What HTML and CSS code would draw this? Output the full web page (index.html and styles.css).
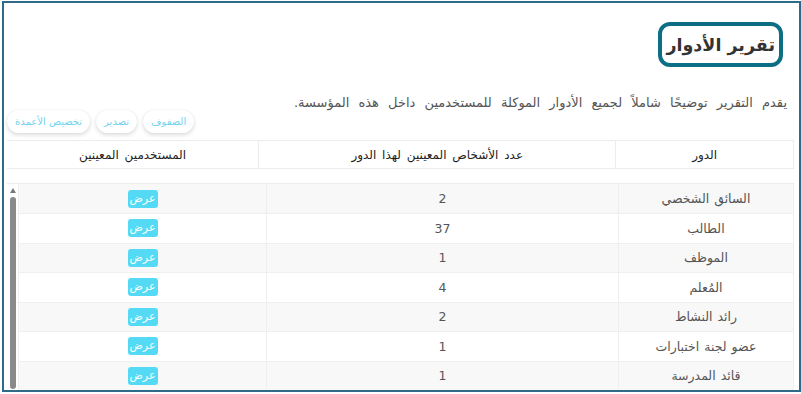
FILE: index.html
```html
<!DOCTYPE html>
<html lang="ar" dir="rtl">
<head>
<meta charset="utf-8">
<link rel="stylesheet" href="styles.css">
</head>
<body>
<div class="frame">
  <div class="title-row">
    <h1 class="title">تقرير الأدوار</h1>
  </div>
  <p class="desc">يقدم التقرير توضيحًا شاملاً لجميع الأدوار الموكلة للمستخدمين داخل هذه المؤسسة.</p>
  <div class="toolbar">
    <button class="tbtn">الصفوف</button>
    <button class="tbtn">تصدير</button>
    <button class="tbtn">تخصيص الأعمدة</button>
  </div>
  <table class="head">
    <colgroup><col class="c1"><col class="c2"><col class="c3"></colgroup>
    <tr class="hrow">
      <th>الدور</th>
      <th>عدد الأشخاص المعينين لهذا الدور</th>
      <th>المستخدمين المعينين</th>
    </tr>
    <tr class="gap"><td colspan="3"></td></tr>
  </table>
  <div class="body-wrap">
    <table class="rows">
      <colgroup><col class="c1"><col class="c2"><col class="c3"></colgroup>
      <tr><td>السائق الشخصي</td><td>2</td><td><span class="view">عرض</span></td></tr>
      <tr><td>الطالب</td><td>37</td><td><span class="view">عرض</span></td></tr>
      <tr><td>الموظف</td><td>1</td><td><span class="view">عرض</span></td></tr>
      <tr><td>المُعلم</td><td>4</td><td><span class="view">عرض</span></td></tr>
      <tr><td>رائد النشاط</td><td>2</td><td><span class="view">عرض</span></td></tr>
      <tr><td>عضو لجنة اختبارات</td><td>1</td><td><span class="view">عرض</span></td></tr>
      <tr><td>قائد المدرسة</td><td>1</td><td><span class="view">عرض</span></td></tr>
    </table>
    <div class="scrollbar">
      <span class="arrow"></span>
      <span class="thumb"></span>
    </div>
  </div>
</div>
</body>
</html>
```

FILE: styles.css
```css
* { box-sizing: border-box; }
html, body { margin: 0; padding: 0; background: #fff; }
body {
  font-family: "DejaVu Sans", "Noto Sans", sans-serif;
  color: #555;
}
.frame {
  margin: 1px 0 0 1px;
  width: 799px;
  height: 391px;
  border: 2px solid #2f6b88;
  overflow: hidden;
  direction: rtl;
  padding: 0 5px 0 3px;
  display: flex;
  flex-direction: column;
}
.title-row {
  display: flex;
  justify-content: flex-start;
  padding-right: 11px;
  margin-top: 19px;
}
.title {
  margin: 0;
  height: 45px;
  padding: 0 4px;
  border: 4px solid #0d6f84;
  border-radius: 12px;
  font-size: 17.5px;
  font-weight: bold;
  color: #333;
  line-height: 36px;
  display: flex;
  align-items: center;
}
.desc {
  margin: 28px 7px 0 0;
  font-size: 13px;
  line-height: 15px;
  word-spacing: 5px;
  color: #555;
}
.toolbar {
  display: flex;
  justify-content: flex-end;
  gap: 6px;
  height: 23px;
}
.tbtn {
  font-family: inherit;
  font-size: 10px;
  color: #74d4ef;
  background: #fff;
  border: none;
  border-radius: 12px;
  height: 23px;
  padding: 0 8px;
  box-shadow: 0 2px 4px rgba(0,0,0,0.14), 0 0 1px rgba(0,0,0,0.1);
}
table {
  border-collapse: collapse;
  table-layout: fixed;
  width: 100%;
}
.c1 { width: 22.6%; }
.c2 { width: 45.4%; }
.c3 { width: 32%; }
.head { margin-top: 7px; }
.hrow th {
  height: 28px;
  border-top: 1px solid #ececec;
  border-bottom: 1px solid #ececec;
  border-left: 1px solid #ececec;
  font-size: 12px;
  font-weight: normal;
  word-spacing: 2px;
  color: #222;
  padding: 0;
}
.hrow th:first-child { border-right: 1px solid #ececec; }
.hrow th:last-child { border-left: none; }
.gap td {
  height: 15px;
  border-bottom: 1px solid #ececec;
  padding: 0;
}
.body-wrap {
  display: flex;
  flex: 1;
  min-height: 0;
}
.rows { flex: 1; }
.rows tr { height: 29.5px; }
.rows tr:nth-child(odd) { background: #f8f8f8; }
.rows td {
  text-align: center;
  font-size: 12.5px;
  word-spacing: 1px;
  color: #555;
  padding: 0;
  border-bottom: 1px solid #efefef;
  border-left: 1px solid #efefef;
}
.rows td:first-child { border-right: 1px solid #efefef; }
.view {
  display: inline-block;
  width: 30px;
  height: 18px;
  line-height: 18px;
  background: #55daf5;
  color: #fff;
  border-radius: 3px;
  font-size: 11px;
  vertical-align: middle;
}
.scrollbar {
  width: 11px;
  flex: none;
  display: flex;
  flex-direction: column;
  align-items: center;
  padding-top: 4px;
}
.arrow {
  width: 0;
  height: 0;
  border-left: 3.5px solid transparent;
  border-right: 3.5px solid transparent;
  border-bottom: 5px solid #7a7a7a;
}
.thumb {
  margin-top: 4px;
  width: 6px;
  height: 192px;
  background: #8a8a8a;
  border-radius: 3px;
}
```
